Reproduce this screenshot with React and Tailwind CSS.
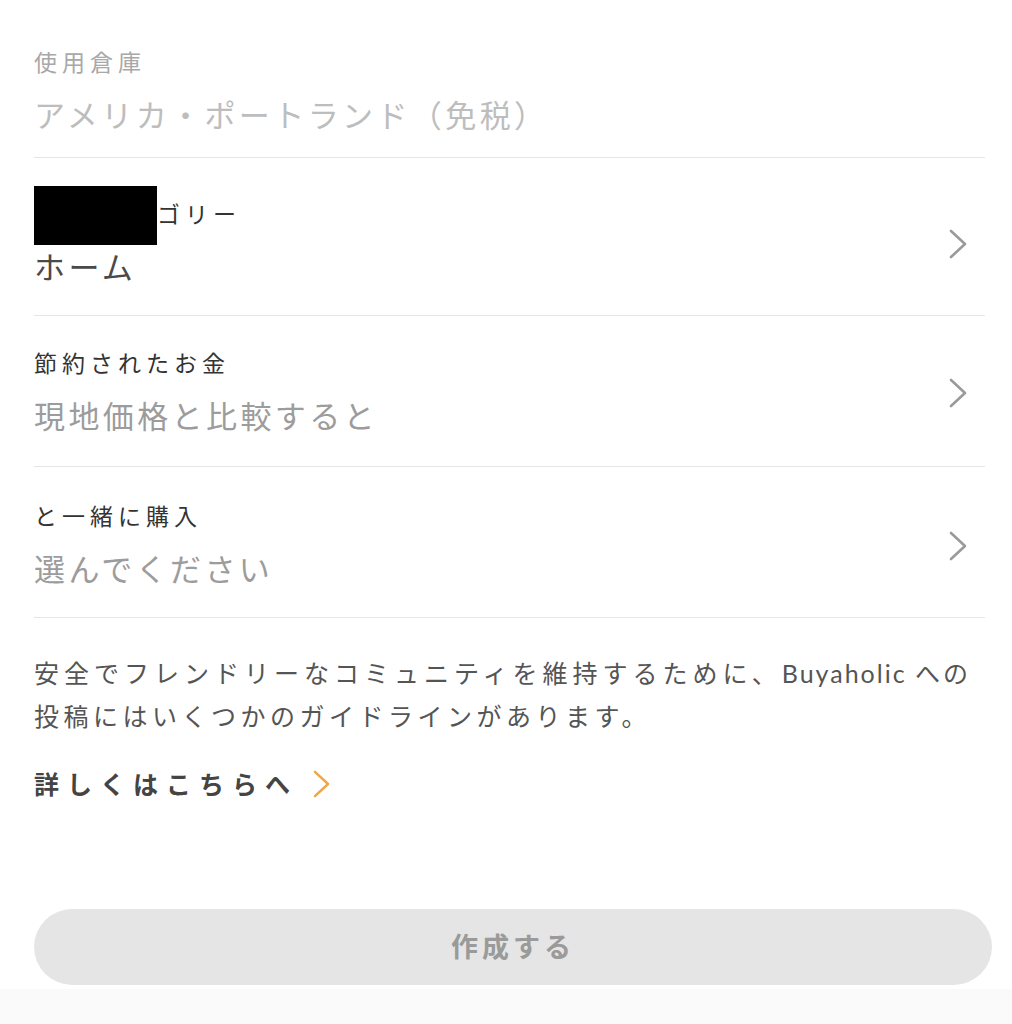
import React from 'react';

const font = { fontFamily: 'Lato, "Noto Sans CJK JP", sans-serif' };

const Chevron = ({ className }) => (
  <svg viewBox="0 0 20 32" className={className} fill="none" stroke="currentColor" strokeWidth="2.6" strokeLinecap="round" strokeLinejoin="round">
    <path d="M3 3 L17 16 L3 29" />
  </svg>
);

const Row = ({ label, value, valueClass, top, chevron = true, labelClass = 'text-[#333]', children }) => (
  <div className={`flex items-center border-b border-[#e6e6e6] mr-[27px] ${top}`}>
    <div className="flex-1 flex flex-col gap-[16px]">
      {children || (
        <div className={`text-[23px] leading-[30px] tracking-[5px] ${labelClass}`}>{label}</div>
      )}
      <div className={`text-[31px] leading-[44px] tracking-[3.4px] ${valueClass}`}>{value}</div>
    </div>
    {chevron && <Chevron className="w-[20px] h-[32px] text-[#9a9a9a] mr-[17px]" />}
  </div>
);

export default function App() {
  return (
    <div className="bg-white w-[1012px] h-[1024px] flex flex-col pl-[34px] overflow-hidden" style={font}>
      <Row
        label="使用倉庫"
        value="アメリカ・ポートランド（免税）"
        labelClass="text-[#a8a8a8]"
        valueClass="text-[#bdbdbd]"
        top="pt-[47px] pb-[20px]"
        chevron={false}
      />
      <Row value="ホーム" valueClass="text-[#4a4a4a]" top="pt-[41px] pb-[26px]">
        <div className="relative text-[23px] leading-[30px] tracking-[5px] text-[#333] pl-[123px]">
          ゴリー
          <div className="absolute left-0 top-[-13px] w-[123px] h-[59px] bg-black" />
        </div>
      </Row>
      <Row
        label="節約されたお金"
        value="現地価格と比較すると"
        valueClass="text-[#9c9c9c]"
        top="pt-[32px] pb-[28px]"
      />
      <Row
        label="と一緒に購入"
        value="選んでください"
        valueClass="text-[#9c9c9c]"
        top="pt-[34px] pb-[26px]"
      />
      <p className="pt-[34px] pr-[20px] text-[25px] leading-[43px] tracking-[4.5px] text-[#555] whitespace-nowrap">
        <span className="tracking-[5px]">安全でフレンドリーなコミュニティを維持するために、</span>
        <span className="tracking-[2px]">Buyaholic </span>
        <span className="tracking-[3px]">への</span>
        <br />
        投稿にはいくつかのガイドラインがあります。
      </p>
      <a className="mt-[26px] flex items-center gap-[14px] text-[25px] leading-[40px] tracking-[8px] font-semibold text-[#444]">
        詳しくはこちらへ
        <Chevron className="w-[19px] h-[30px] text-[#f0a646]" />
      </a>
      <button className="mt-[105px] mr-[20px] h-[76px] rounded-full bg-[#e5e5e5] text-[27px] font-bold tracking-[4px] text-[#9a9a9a]">
        作成する
      </button>
      <div className="mt-[4px] -ml-[34px] flex-1 bg-[#fafafa]" />
    </div>
  );
}
